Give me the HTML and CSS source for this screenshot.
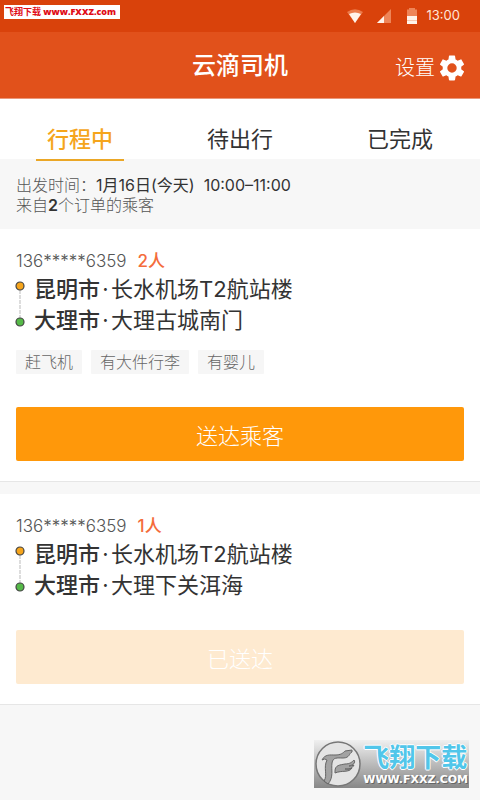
FILE: index.html
```html
<!DOCTYPE html>
<html lang="zh-CN">
<head>
<meta charset="utf-8">
<meta name="viewport" content="width=device-width, initial-scale=1">
<title>云滴司机</title>
<link rel="stylesheet" href="styles.css">
</head>
<body>
<div class="status">
  <div class="site-tag">飞翔下载 <b>www.FXXZ.com</b></div>
  <div class="indicators">
    <svg width="16" height="14" viewBox="0 0 16 14" aria-hidden="true"><path d="M0 3Q8-2.500 16 3L8 14Z" fill="#ec7c4c"/><path d="M2 5Q8 2 14 5L8 14Z" fill="#fff3ea"/></svg>
    <svg width="14" height="14" viewBox="0 0 14 14" aria-hidden="true"><path d="M14 0V14H0Z" fill="#ee8558"/><path d="M7 7V14H0Z" fill="#fff3ea"/></svg>
    <svg width="10" height="16" viewBox="0 0 10 16" aria-hidden="true"><path d="M2 0H8V1.500H10V8H0V1.500H2Z" fill="#ee8558"/><path d="M0 8H10V16H0Z" fill="#fff3ea"/><path d="M0 12.500H10" stroke="#f5b698" stroke-width=".7"/></svg>
    <span class="clock">13:00</span>
  </div>
</div>
<header class="header">
  <h1 class="title">云滴司机</h1>
  <a class="settings" href="#settings">设置
    <svg width="26" height="26" viewBox="1.500 1.500 21 21" aria-hidden="true"><path fill="#fff" d="M19.430 12.980c.04-.32.07-.64.07-.98s-.03-.66-.07-.98l2.110-1.650c.19-.15.24-.42.12-.64l-2-3.460c-.12-.22-.39-.3-.61-.22l-2.490 1c-.52-.4-1.080-.73-1.690-.98l-.38-2.650C14.460 2.180 14.250 2 14 2h-4c-.25 0-.46.18-.49.42l-.38 2.650c-.61.25-1.170.59-1.690.98l-2.490-1c-.23-.09-.49 0-.61.22l-2 3.460c-.13.22-.07.49.12.64l2.110 1.650c-.04.32-.07.65-.07.98s.03.66.07.98l-2.110 1.650c-.19.15-.24.42-.12.64l2 3.460c.12.22.39.3.61.22l2.490-1c.52.4 1.080.73 1.690.98l.38 2.650c.03.24.24.42.49.42h4c.25 0 .46-.18.49-.42l.38-2.650c.61-.25 1.170-.59 1.690-.98l2.490 1c.23.09.49 0 .61-.22l2-3.460c.12-.22.07-.49-.12-.64l-2.110-1.650zM12 15.800a3.800 3.800 0 1 1 0-7.600 3.800 3.800 0 0 1 0 7.600z"/></svg>
  </a>
</header>
<nav class="tabs">
  <a class="tab active" href="#current">行程中</a>
  <a class="tab" href="#upcoming">待出行</a>
  <a class="tab" href="#completed">已完成</a>
</nav>
<main>
  <section class="summary">
    <p>出发时间：<span class="when">1月16日(今天)</span><span class="when time">10:00–11:00</span></p>
    <p>来自<b>2</b>个订单的乘客</p>
  </section>
  <article class="order">
    <p class="contact">136*****6359<strong class="count">2人</strong></p>
    <div class="route">
      <svg class="track" width="10" height="48" viewBox="0 0 10 48" aria-hidden="true"><path d="M5 10V38" stroke="#ddd" stroke-width="2" stroke-dasharray="4 1"/><circle cx="5" cy="6" r="4" fill="#f6a51c" stroke="#444" stroke-width="1.200"/><circle cx="5" cy="42" r="4" fill="#55b948" stroke="#444" stroke-width="1.200"/></svg>
      <div class="stops">
        <p><b>昆明市</b><i class="dot">·</i>长水机场T2航站楼</p>
        <p><b>大理市</b><i class="dot">·</i>大理古城南门</p>
      </div>
    </div>
    <ul class="tags"><li>赶飞机</li><li>有大件行李</li><li>有婴儿</li></ul>
    <button class="action" type="button">送达乘客</button>
  </article>
  <article class="order">
    <p class="contact">136*****6359<strong class="count">1人</strong></p>
    <div class="route">
      <svg class="track" width="10" height="48" viewBox="0 0 10 48" aria-hidden="true"><path d="M5 10V38" stroke="#ddd" stroke-width="2" stroke-dasharray="4 1"/><circle cx="5" cy="6" r="4" fill="#f6a51c" stroke="#444" stroke-width="1.200"/><circle cx="5" cy="42" r="4" fill="#55b948" stroke="#444" stroke-width="1.200"/></svg>
      <div class="stops">
        <p><b>昆明市</b><i class="dot">·</i>长水机场T2航站楼</p>
        <p><b>大理市</b><i class="dot">·</i>大理下关洱海</p>
      </div>
    </div>
    <button class="action" type="button" disabled>已送达</button>
  </article>
</main>
<aside class="brand">
  <svg width="46" height="46" viewBox="0 0 46 46" aria-hidden="true">
    <circle cx="23" cy="23" r="22" fill="#e4e4e4" stroke="#777" stroke-width="1.500"/>
    <g fill="#a2a2a2" stroke="#666" stroke-linejoin="round">
      <path d="M7 19C10 13 15 14 20 14C26 14 28 12 30 10L37 9L37 11C34 12 35 17 28 17C22 17 18 16 17 22C16 29 19 36 13 43L9 40C13 34 8 27 12 19Q10 17 7 19Z"/>
      <path d="M20 30C20 24 25 24 30 23C35 23 37 21 39 19C41 22 38 24 34 25Q37 25 39 24C37 28 34 28 30 28Q34 29 37 27C34 32 27 29 20 32Z"/>
    </g>
  </svg>
  <div class="brand-text"><span class="brand-name">飞翔下载</span><span class="brand-url">WWW.FXXZ.COM</span></div>
</aside>
</body>
</html>
```
FILE: styles.css
```css
* { box-sizing: border-box; }
body {
  margin: 0;
  min-height: 100vh;
  background: #f7f7f7;
  color: #333;
  font-family: Inter, "Noto Sans CJK SC", sans-serif;
  font-weight: 300;
}
p, h1, ul { margin: 0; padding: 0; }
a { color: inherit; text-decoration: none; }
.status {
  display: flex;
  justify-content: space-between;
  height: 32px;
  padding: 0 20px 0 4px;
  background: #d9420b;
}
.site-tag {
  height: 14px;
  margin-top: 5px;
  padding: 0 4px 0 1px;
  background: #fff;
  color: #e00b16;
  font: bold 9px/14px "Open Sans", "Noto Sans CJK SC", sans-serif;
  white-space: nowrap;
}
.site-tag b { font-size: 9px; }
.indicators { display: flex; align-items: center; gap: 14px; }
.indicators svg:nth-child(3) { margin-left: 2px; }
.clock { margin-left: -4px; color: #ffe5d8; font-size: 13px; font-weight: 400; line-height: 30px; align-self: flex-start; }
.header {
  display: grid;
  grid-template-columns: 1fr auto 1fr;
  align-items: center;
  height: 67px;
  padding: 2px 15px 0;
  background: #e1511b;
  border-bottom: 1px solid #ea977a;
  color: #fff;
}
.title { grid-column: 2; font-size: 24px; font-weight: 500; line-height: 36px; }
.settings { display: flex; align-items: center; justify-self: end; gap: 4px; padding-top: 4px; font-size: 20px; line-height: 28px; }
.tabs {
  display: grid;
  grid-template-columns: repeat(3, 1fr);
  height: 60px;
  background: #fff;
}
.tab { justify-self: center; height: 62px; padding: 23px 11px 0; font-size: 22px; font-weight: 400; line-height: 34px; }
.active { border-bottom: 2px solid #eba726; color: #f5a51c; font-weight: 500; }
.summary { padding: 16px 16px 14px; color: #555; font-size: 16px; line-height: 20px; }
.summary b { color: #333; font-weight: 600; }
.when { color: #333; font-weight: 400; }
.time { margin-left: 9px; }
.order { padding: 20px 16px; background: #fff; border-bottom: 1px solid #e6e6e6; }
.order + .order { margin-top: 12px; }
.contact { color: #555; font-size: 17px; line-height: 25px; }
.count { margin-left: 11px; color: #f46c3b; font-size: 17px; font-weight: 500; }
.route { display: flex; gap: 9px; margin-left: -1px; }
.track { flex: none; margin-top: 6px; }
.stops { font-size: 22px; font-weight: 400; line-height: 31px; }
.stops b { font-weight: 500; }
.dot { display: inline-block; width: 11px; font-style: normal; text-align: center; }
.tags { display: flex; gap: 9px; margin-top: 14px; list-style: none; }
.tags li { padding: 0 9px; background: #f6f6f6; color: #666; font-size: 16px; line-height: 24px; border-radius: 1px; }
.action {
  display: block;
  width: 100%;
  height: 54px;
  margin-top: 33px;
  padding: 0;
  border: 0;
  border-radius: 2px;
  background: #ff980a;
  color: #fff;
  font: inherit;
  font-size: 22px;
}
.action:disabled { margin-top: 29px; background: #feead0; }
.brand {
  position: absolute;
  right: 11px;
  bottom: 12px;
  display: flex;
  align-items: center;
  height: 48px;
  padding: 0 1px 0 1px;
  gap: 2px;
  background: linear-gradient(#f0f0f0, #bbb 50%, #888);
}
.brand-text { display: flex; flex-direction: column; }
.brand-name {
  color: #51c6ea;
  font-size: 26px;
  font-weight: 700;
  line-height: 32px;
  text-shadow: 1px 0 #fff, -1px 0 #fff, 0 1px #fff, 0 -1px #fff;
}
.brand-url { color: #fff; font: bold 11px/12px "DejaVu Sans", sans-serif; text-shadow: 1px 1px #666; }
```
